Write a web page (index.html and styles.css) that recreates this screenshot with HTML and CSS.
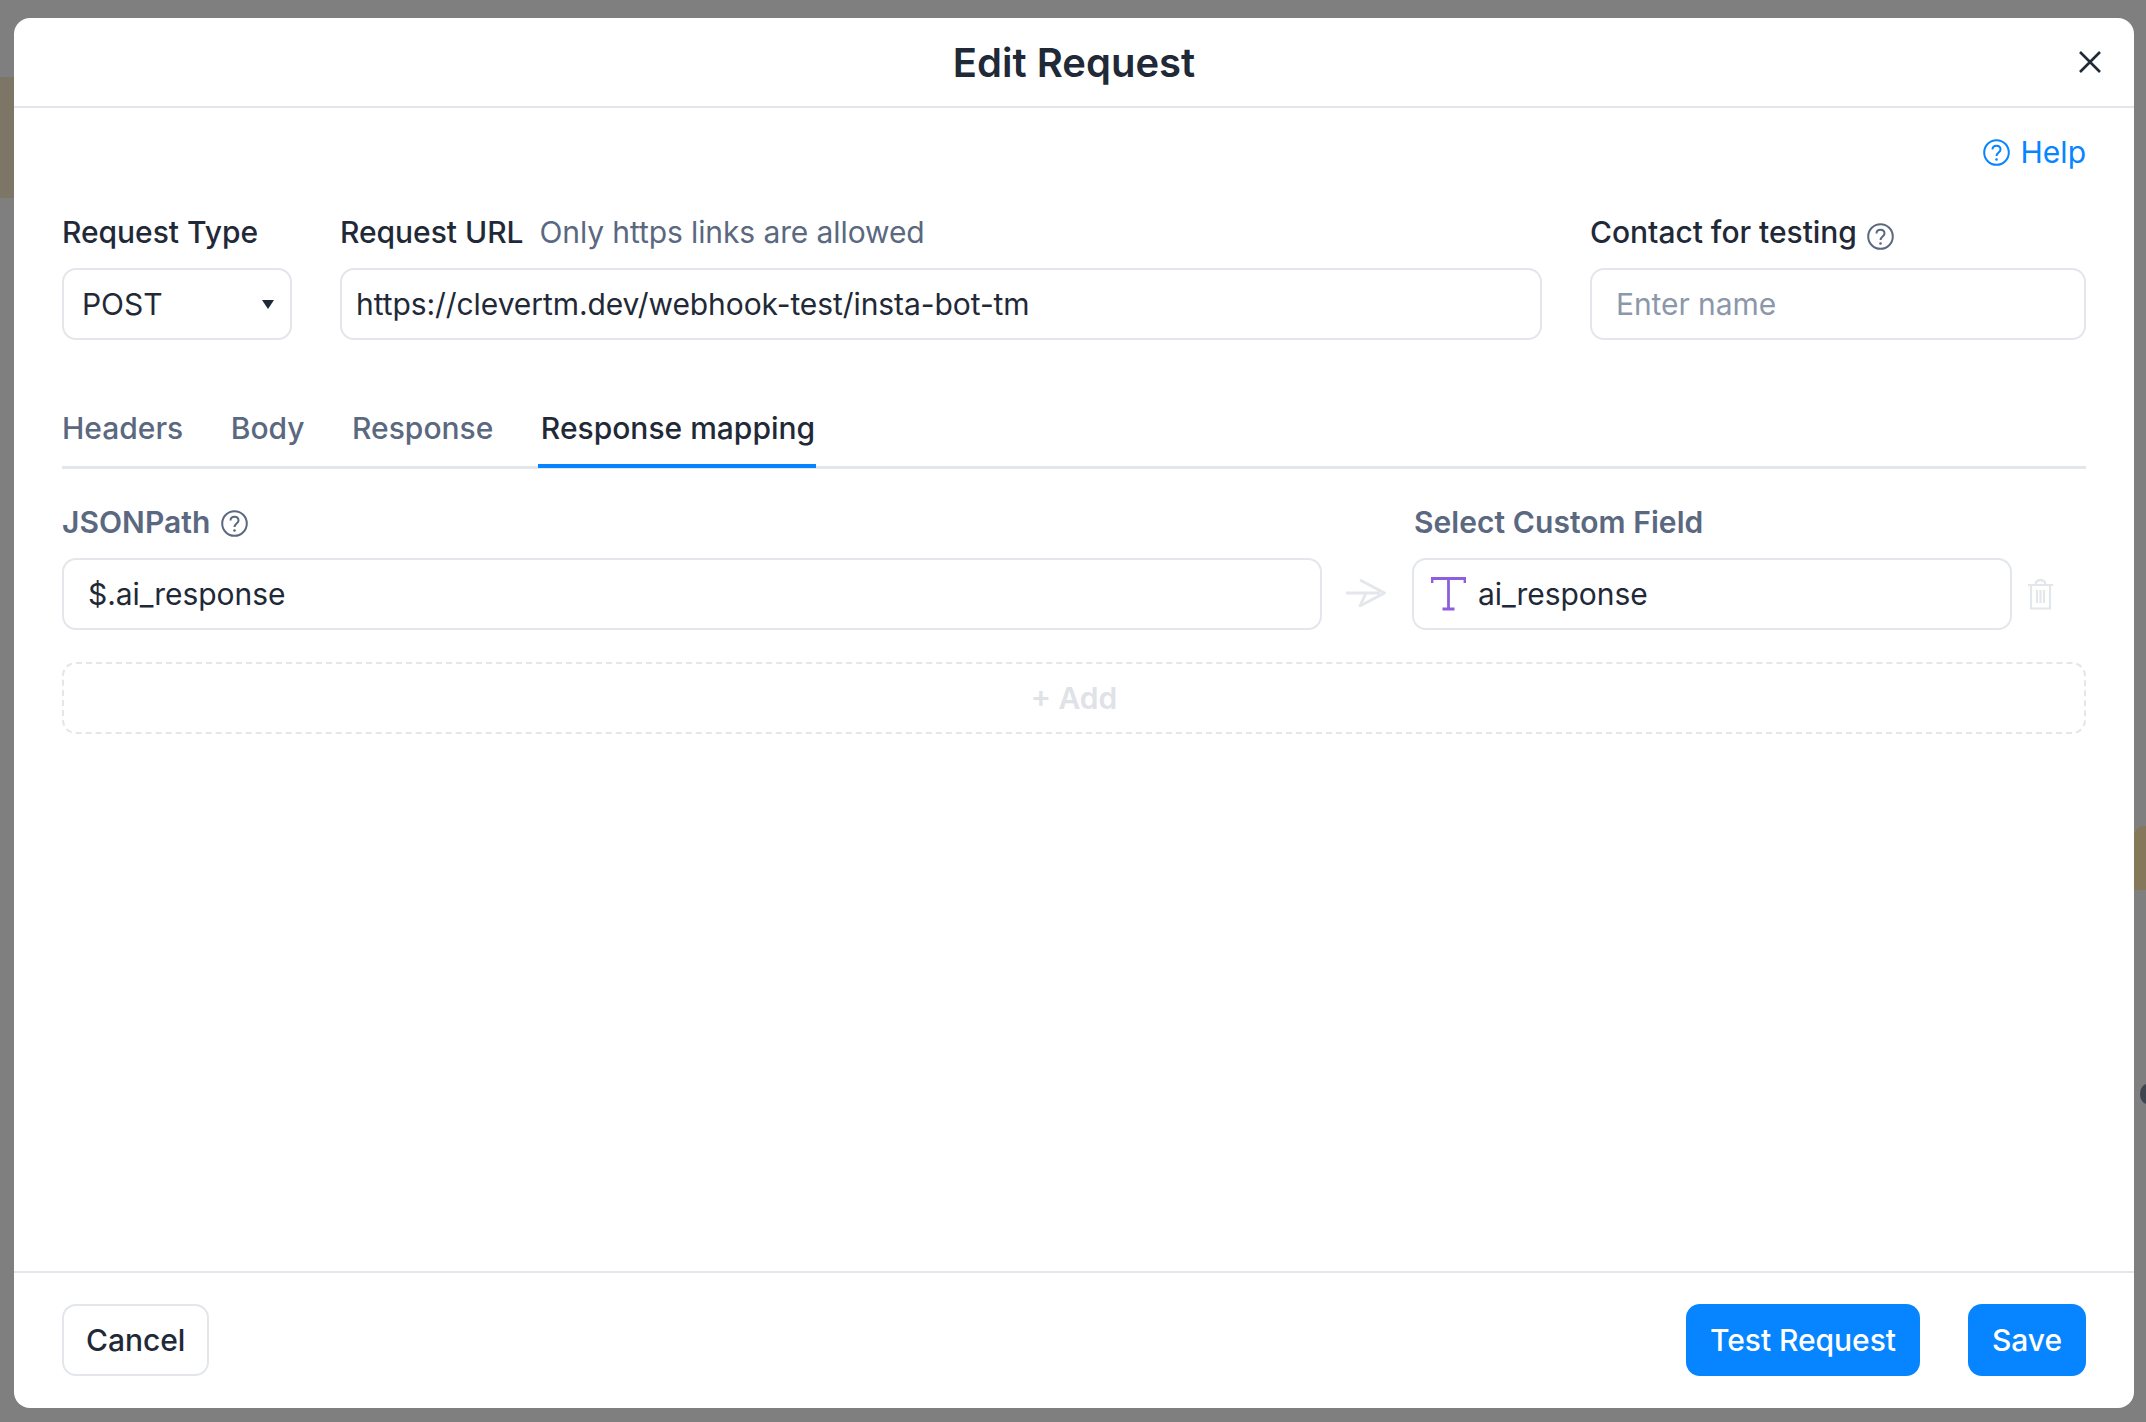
FILE: index.html
```html
<!DOCTYPE html>
<html lang="en">
<head>
    <meta charset="UTF-8">
    <meta name="viewport" content="width=device-width, initial-scale=1.0">
    <title>Edit Request</title>
    <link rel="stylesheet" href="styles.css">
</head>
<body>
    <!-- page behind the overlay -->
    <div class="backdrop-patch patch-left"></div>
    <div class="backdrop-patch patch-right"></div>
    <div class="backdrop-dot"></div>

    <div class="modal">
        <header class="modal-header">
            <span></span>
            <h1 class="modal-title">Edit Request</h1>
            <button class="close-btn" type="button" aria-label="Close">
                <svg width="24" height="24" viewBox="0 0 24 24"><path d="M2 2 L22 22 M22 2 L2 22" fill="none" stroke="#1f2937" stroke-width="2.6"/></svg>
            </button>
        </header>

        <div class="modal-body">
            <div class="help-row">
                <a class="help-link" href="#">
                    <svg class="q-icon" viewBox="0 0 27 27"><use href="#q"/></svg>
                    Help
                </a>
            </div>

            <div class="request-row">
                <div class="field field-type">
                    <div class="field-label">Request Type</div>
                    <div class="select-box">
                        <span>POST</span>
                        <i class="caret"></i>
                    </div>
                </div>
                <div class="field field-url">
                    <div class="field-label">Request URL <span class="field-hint">Only https links are allowed</span></div>
                    <input class="text-input url-input" type="text" value="https://clevertm.dev/webhook-test/insta-bot-tm">
                </div>
                <div class="field field-contact">
                    <div class="field-label">Contact for testing
                        <svg class="q-icon q-gray" viewBox="0 0 27 27"><use href="#q"/></svg>
                    </div>
                    <input class="text-input" type="text" placeholder="Enter name">
                </div>
            </div>

            <nav class="tabs">
                <a class="tab" href="#">Headers</a>
                <a class="tab" href="#">Body</a>
                <a class="tab" href="#">Response</a>
                <a class="tab active" href="#">Response mapping</a>
            </nav>

            <div class="map-labels">
                <div class="map-label map-label-path">JSONPath
                    <svg class="q-icon q-gray" viewBox="0 0 27 27"><use href="#q"/></svg>
                </div>
                <div class="map-label map-label-field">Select Custom Field</div>
            </div>

            <div class="map-row">
                <input class="text-input map-path" type="text" value="$.ai_response">
                <div class="map-arrow">
                    <svg width="40" height="28" viewBox="0 0 40 28"><path d="M0 14 H34 M14 1 L38.500 14 L14 27 L20 14" fill="none" stroke="#e3e6ea" stroke-width="2.8" stroke-linejoin="round"/></svg>
                </div>
                <div class="map-field">
                    <svg class="type-icon" width="35" height="34" viewBox="0 0 35 34"><path d="M1 6 V1.500 H34 V6 M17.500 1.500 V32 M11.500 32 H23.500" fill="none" stroke="#8e5fdc" stroke-width="2.8"/></svg>
                    <span>ai_response</span>
                </div>
                <div class="map-trash">
                    <svg width="27" height="32" viewBox="0 0 27 32"><path d="M1 7 H26 M9 7 V4 Q13.500 0 18 4 V7 M4 7 V30.500 H23 V7 M10 12 V25 M13.500 12 V25 M17 12 V25" fill="none" stroke="#e3e6ea" stroke-width="2.2"/></svg>
                </div>
            </div>

            <button class="add-btn" type="button">+ Add</button>
        </div>

        <footer class="modal-footer">
            <button class="btn btn-plain" type="button">Cancel</button>
            <div class="footer-right">
                <button class="btn btn-blue" type="button">Test Request</button>
                <button class="btn btn-blue" type="button">Save</button>
            </div>
        </footer>
    </div>

    <svg class="icon-defs" width="0" height="0">
        <symbol id="q" viewBox="0 0 27 27">
            <circle cx="13.500" cy="13.500" r="12.300" fill="none" stroke="currentColor" stroke-width="2"/>
            <path d="M9.500 10.500 C9.500 5.500 17.500 5.500 17.500 10.500 C17.500 13.500 13.500 13.500 13.500 17" fill="none" stroke="currentColor" stroke-width="2"/>
            <circle cx="13.500" cy="20.500" r="1.300" fill="currentColor"/>
        </symbol>
    </svg>
</body>
</html>
```

FILE: styles.css
```css
*{
    margin: 0;
    padding: 0;
    box-sizing: border-box;
}

:root{
    --text: #1f2937;
    --muted: #5a6880;
    --blue: #0784ff;
    --line: #e3e6ea;
}

html, body{
    height: 1422px;
    overflow: hidden;
}

body{
    position: relative;
    background: #7f7f7f;
    color: var(--text);
    font-family: Inter, 'Liberation Sans', sans-serif;
    font-size: 30px;
    padding: 18px 12px 14px 14px;
}

/* page behind the overlay */
.backdrop-patch{
    position: absolute;
    background: #7d7565;
}

.patch-left{
    left: 0;
    top: 77px;
    width: 14px;
    height: 121px;
}

.patch-right{
    right: 0;
    top: 826px;
    width: 12px;
    height: 64px;
    background: #84775a;
    border-top-left-radius: 10px;
}

.backdrop-dot{
    position: absolute;
    right: -8px;
    top: 1084px;
    width: 14px;
    height: 20px;
    border-radius: 50%;
    background: #3f4650;
}

.icon-defs{
    position: absolute;
}

.modal{
    position: relative;
    height: 100%;
    display: flex;
    flex-direction: column;
    background: #fff;
    border-radius: 16px;
}

.modal-header{
    display: grid;
    grid-template-columns: 1fr auto 1fr;
    align-items: center;
    height: 90px;
    border-bottom: 2px solid var(--line);
}

.modal-title{
    font-size: 40px;
    font-weight: 600;
}

.close-btn{
    justify-self: end;
    display: flex;
    margin-right: 32px;
    background: none;
    border: none;
}

.modal-body{
    flex: 1;
    padding: 0 48px;
}

.help-row{
    display: flex;
    justify-content: flex-end;
    padding-top: 26px;
    height: 106px;
}

.help-link{
    display: flex;
    align-items: center;
    gap: 11px;
    height: 36px;
    color: var(--blue);
    text-decoration: none;
}

.q-icon{
    width: 27px;
    height: 27px;
}

.q-gray{
    color: var(--muted);
    vertical-align: -7px;
    margin-left: 2px;
}

.map-label .q-gray{
    vertical-align: -4px;
    margin-left: 3px;
}

.request-row{
    display: flex;
    gap: 48px;
}

.field-type{
    width: 230px;
}

.field-url{
    flex: 1;
}

.field-contact{
    width: 496px;
}

.field-label{
    height: 36px;
    line-height: 36px;
    margin-bottom: 18px;
    font-weight: 500;
    white-space: nowrap;
    letter-spacing: -0.03px;
}

.field-hint{
    margin-left: 8px;
    color: var(--muted);
    font-weight: 400;
    letter-spacing: -0.1px;
}

.text-input, .select-box, .map-field{
    height: 72px;
    border: 2px solid var(--line);
    border-radius: 14px;
    background: #fff;
    color: var(--text);
    font: inherit;
    letter-spacing: -0.07px;
}

.text-input{
    width: 100%;
    padding: 0 24px;
    outline: none;
}

.text-input::placeholder{
    color: #8b97aa;
}

.url-input{
    padding: 0 14px;
}

.select-box{
    display: flex;
    align-items: center;
    justify-content: space-between;
    padding: 0 16px 0 18px;
}

.caret{
    width: 0;
    height: 0;
    border-left: 6.5px solid transparent;
    border-right: 6.5px solid transparent;
    border-top: 9px solid var(--text);
}

.tabs{
    display: flex;
    gap: 47.5px;
    height: 96px;
    margin-top: 33px;
    padding-top: 37px;
    border-bottom: 3px solid var(--line);
}

.tab{
    height: 58px;
    color: var(--muted);
    text-decoration: none;
    font-weight: 500;
    line-height: 36px;
}

.tab.active{
    margin: 0 -1px 0 -3px;
    padding: 0 1px 0 3px;
    color: var(--text);
    border-bottom: 4px solid var(--blue);
}

.map-labels{
    display: flex;
    margin-top: 35px;
    height: 36px;
    line-height: 36px;
    color: var(--muted);
    font-weight: 600;
    letter-spacing: 0.05px;
}

.map-label-path{
    width: 1352px;
}

.map-row{
    display: flex;
    align-items: center;
    margin-top: 18px;
}

.map-path{
    width: 1260px;
    flex: none;
}

.map-arrow{
    display: flex;
    width: 90px;
    padding-left: 24px;
    margin-top: -3px;
}

.map-field{
    display: flex;
    align-items: center;
    width: 600px;
    padding-left: 17px;
    gap: 12px;
}

.map-trash{
    display: flex;
    padding-left: 15px;
}

.add-btn{
    display: block;
    width: 100%;
    height: 72px;
    margin-top: 32px;
    border: 2px dashed var(--line);
    border-radius: 14px;
    background: #fff;
    color: #dfe2e6;
    font: inherit;
    font-weight: 600;
}

.modal-footer{
    display: flex;
    justify-content: space-between;
    height: 137px;
    padding: 31px 48px 32px;
    border-top: 2px solid var(--line);
}

.footer-right{
    display: flex;
    gap: 48px;
}

.btn{
    height: 72px;
    padding: 0 24px;
    border-radius: 14px;
    font: inherit;
    font-weight: 500;
    letter-spacing: -0.05px;
}

.btn-plain{
    padding: 0 22px;
    background: #fff;
    color: var(--text);
    border: 2px solid var(--line);
}

.btn-blue{
    background: var(--blue);
    color: #fff;
    border: none;
}
```
